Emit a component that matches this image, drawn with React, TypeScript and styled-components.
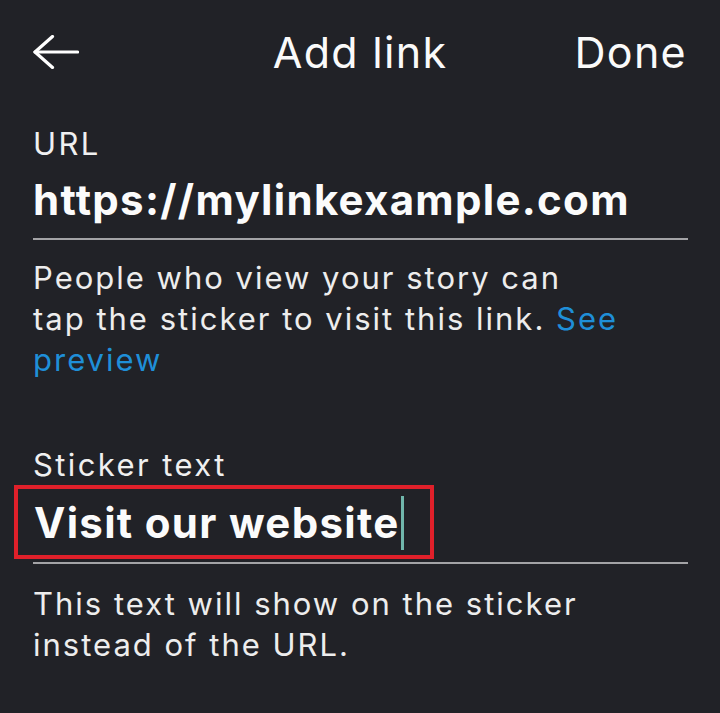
import React from 'react';
import styled, { createGlobalStyle } from 'styled-components';

const GlobalStyle = createGlobalStyle`
    html, body {
        margin: 0;
        padding: 0;
        background: #212227;
    }
    body {
        font-family: Inter, Roboto, "Liberation Sans", sans-serif;
        color: #f4f4f4;
        -webkit-font-smoothing: antialiased;
    }
`;

const Screen = styled.div`
    width: 720px;
    height: 713px;
    background: #212227;
    overflow: hidden;
`;

const Header = styled.header`
    display: grid;
    grid-template-columns: 1fr auto 1fr;
    align-items: center;
    height: 104px;
    padding: 0 33px 0 33px;
`;

const BackButton = styled.button`
    justify-self: start;
    background: none;
    border: 0;
    padding: 0;
    display: flex;
    color: #fff;
`;

const Title = styled.h1`
    margin: 0;
    font-size: 43px;
    font-weight: 400;
    letter-spacing: 1.3px;
    color: #fafafa;
`;

const DoneButton = styled.button`
    justify-self: end;
    background: none;
    border: 0;
    padding: 0;
    font-family: inherit;
    font-size: 43px;
    font-weight: 400;
    letter-spacing: 1.3px;
    color: #fafafa;
`;

const Body = styled.main`
    padding: 20px 32px 0 33px;
    display: flex;
    flex-direction: column;
`;

const Field = styled.section<{ $gap?: number }>`
    display: flex;
    flex-direction: column;
    margin-top: ${(p) => p.$gap ?? 0}px;
`;

const Label = styled.label`
    font-size: 31px;
    line-height: 40px;
    letter-spacing: 2.4px;
    color: #f0f0f0;
`;

const Value = styled.div<{ $boxed?: boolean }>`
    font-size: 42px;
    line-height: 52px;
    font-weight: 700;
    letter-spacing: 1.3px;
    color: #fbfbfb;
    padding: ${(p) => (p.$boxed ? '0 0 3px' : '10px 0 12px')};
    display: flex;
    align-items: center;
`;

const Highlight = styled.div`
    display: inline-flex;
    align-items: center;
    margin-left: -19px;
    padding: 7px 26px 5px 16px;
    border: 4px solid #e0202a;
`;

const Caret = styled.span`
    display: inline-block;
    width: 3px;
    height: 54px;
    margin: 0 0 0 1px;
    background: #70b6ab;
`;

const Rule = styled.hr`
    margin: 0;
    border: 0;
    height: 2px;
    background: #a3a3a6;
`;

const Help = styled.p<{ $top: number }>`
    margin: ${(p) => p.$top}px 0 0;
    font-size: 31px;
    line-height: 41px;
    letter-spacing: 2px;
    color: #ededed;
    max-width: 630px;
`;

const Link = styled.a`
    color: #1f8fd8;
    text-decoration: none;
`;

export default function App() {
    return (
        <Screen>
            <GlobalStyle />
            <Header>
                <BackButton aria-label="Back">
                    <svg width="46" height="34" viewBox="0 0 46 34" fill="none" stroke="#fff" strokeWidth="3.2" strokeLinecap="round" strokeLinejoin="round">
                        <path d="M44.5 17H2" />
                        <path d="M19.5 1.5L2 17l17.5 15.5" />
                    </svg>
                </BackButton>
                <Title>Add link</Title>
                <DoneButton>Done</DoneButton>
            </Header>
            <Body>
                <Field>
                    <Label>URL</Label>
                    <Value>https://mylinkexample.com</Value>
                    <Rule />
                    <Help $top={17}>
                        People who view your story can
                        <br />
                        tap the sticker to visit this link.{' '}
                        <Link href="#">See preview</Link>
                    </Help>
                </Field>
                <Field $gap={65}>
                    <Label>Sticker text</Label>
                    <Value $boxed>
                        <Highlight>
                            Visit our website
                            <Caret />
                        </Highlight>
                    </Value>
                    <Rule />
                    <Help $top={19}>This text will show on the sticker instead of the URL.</Help>
                </Field>
            </Body>
        </Screen>
    );
}
